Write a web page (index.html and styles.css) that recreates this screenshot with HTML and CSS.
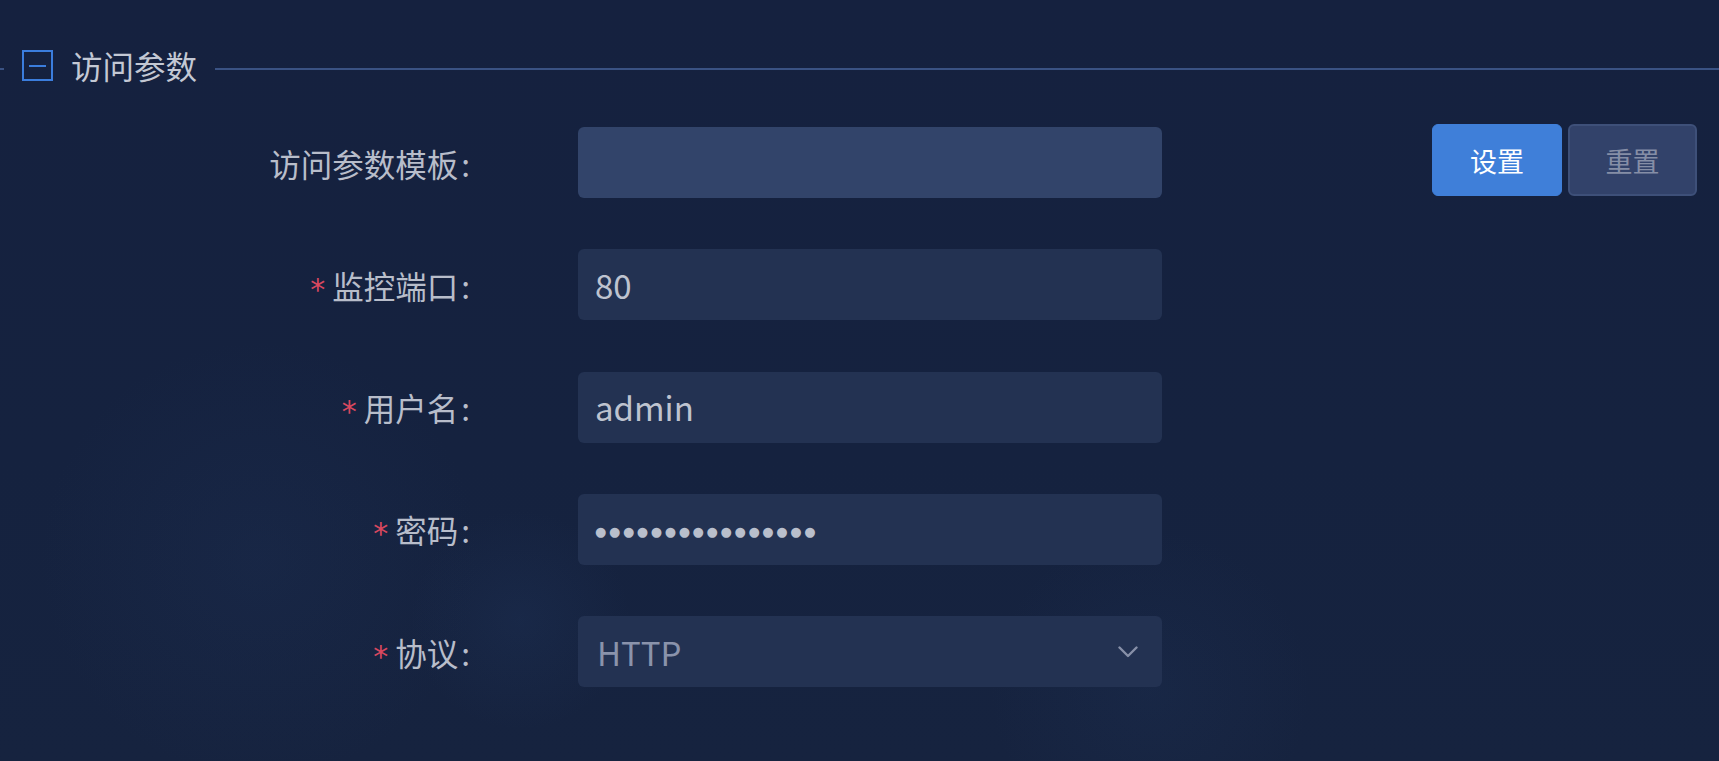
FILE: index.html
```html
<!DOCTYPE html>
<html lang="zh-CN">
<head>
<meta charset="utf-8">
<title>访问参数</title>
<link rel="stylesheet" href="styles.css">
</head>
<body>
<div class="page">
  <div class="section-head">
    <span class="line-left"></span>
    <span class="toggle"><span class="minus"></span></span>
    <span class="title">访问参数</span>
    <span class="line-right"></span>
  </div>

  <div class="form">
    <div class="row">
      <div class="label">访问参数模板<span class="colon">:</span></div>
      <div class="control control-template"></div>
      <div class="actions">
        <button class="btn btn-primary">设置</button>
        <button class="btn btn-reset">重置</button>
      </div>
    </div>

    <div class="row">
      <div class="label"><span class="req">*</span>监控端口<span class="colon">:</span></div>
      <div class="control">80</div>
    </div>

    <div class="row">
      <div class="label"><span class="req">*</span>用户名<span class="colon">:</span></div>
      <div class="control">admin</div>
    </div>

    <div class="row">
      <div class="label"><span class="req">*</span>密码<span class="colon">:</span></div>
      <div class="control"><span class="dots">●●●●●●●●●●●●●●●●</span></div>
    </div>

    <div class="row">
      <div class="label"><span class="req">*</span>协议<span class="colon">:</span></div>
      <div class="control control-select">
        <span class="select-value">HTTP</span>
        <svg class="chevron" width="20" height="12" viewBox="0 0 20 12"><path d="M1.5 1.5 L10 10 L18.5 1.5" fill="none" stroke="#8790a8" stroke-width="2.4" stroke-linecap="round" stroke-linejoin="round"/></svg>
      </div>
    </div>
  </div>
</div>
</body>
</html>
```

FILE: styles.css
```css
html, body {
  margin: 0;
  padding: 0;
}

body {
  width: 1719px;
  height: 761px;
  overflow: hidden;
  font-family: "Noto Sans CJK SC", "Noto Sans", sans-serif;
  background-color: #152240;
  background-image:
    radial-gradient(circle at 260px 560px, rgba(36, 58, 100, 0.18) 0, rgba(36, 58, 100, 0) 220px),
    radial-gradient(circle at 520px 620px, rgba(45, 75, 125, 0.14) 0, rgba(45, 75, 125, 0) 110px),
    radial-gradient(circle at 1150px 690px, rgba(40, 66, 110, 0.14) 0, rgba(40, 66, 110, 0) 160px),
    linear-gradient(180deg, #15213f 0%, #15223f 60%, #16233f 100%);
}

.page {
  padding-top: 50px;
}

.section-head {
  display: flex;
  align-items: center;
  height: 31px;
}

.line-left {
  width: 4px;
  height: 2px;
  margin-top: 7px;
  background: #3a5283;
}

.toggle {
  margin-left: 18px;
  width: 31px;
  height: 31px;
  box-sizing: border-box;
  border: 2px solid #3b7ddd;
  display: flex;
  align-items: center;
  justify-content: center;
}

.minus {
  width: 17px;
  height: 2px;
  background: #3b7ddd;
}

.title {
  margin-left: 18px;
  font-size: 31.5px;
  line-height: 31px;
  color: #c3c8d4;
}

.line-right {
  flex: 1;
  margin-left: 18px;
  height: 2px;
  margin-top: 7px;
  background: #3a5283;
}

.form {
  margin-top: 46px;
  display: flex;
  flex-direction: column;
  gap: 51.25px;
}

.row {
  display: flex;
  align-items: center;
  height: 71px;
}

.label {
  width: 470px;
  display: flex;
  justify-content: flex-end;
  align-items: center;
  font-size: 31.5px;
  color: #b8bdca;
  white-space: nowrap;
}

.colon {
  margin-left: 3px;
}

.req {
  color: #d9485f;
  font-family: "DejaVu Sans", sans-serif;
  font-size: 30px;
  line-height: 1;
  margin-right: 7px;
  padding-top: 10px;
}

.control {
  margin-left: 108px;
  width: 584px;
  height: 71px;
  box-sizing: border-box;
  padding: 0 17px;
  border-radius: 6px;
  background: #233252;
  display: flex;
  align-items: center;
  font-size: 33px;
  color: #bec3cf;
}

.control-template {
  background: #32446a;
}

.dots {
  font-family: "DejaVu Sans", sans-serif;
  font-size: 13px;
  letter-spacing: 2.6px;
  color: #b9bfcc;
  padding-top: 5px;
}

.control-select {
  justify-content: space-between;
  padding-right: 24px;
}

.select-value {
  color: #8a93ab;
  padding-left: 2px;
}

.actions {
  margin-left: auto;
  margin-right: 22px;
  align-self: flex-start;
  margin-top: -3px;
  display: flex;
  gap: 6px;
}

.btn {
  width: 130px;
  height: 72px;
  border-radius: 6px;
  font-family: "Noto Sans CJK SC", sans-serif;
  font-size: 27px;
  padding: 0;
  cursor: pointer;
}

.btn-primary {
  background: #3f7fd9;
  border: 1px solid #3f7fd9;
  color: #ffffff;
}

.btn-reset {
  width: 129px;
  background: #32426a;
  border: 2px solid #3e5079;
  color: #858ea6;
}
```
